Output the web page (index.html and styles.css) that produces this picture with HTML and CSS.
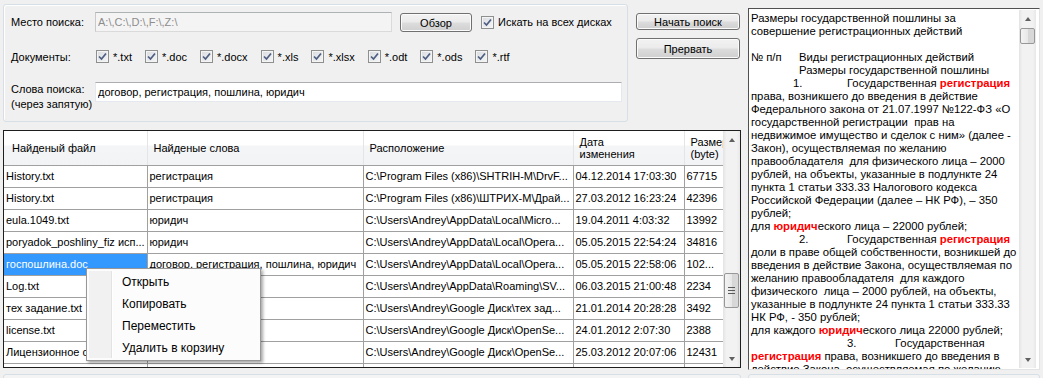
FILE: index.html
```html
<!DOCTYPE html>
<html lang="ru">
<head>
  <meta charset="UTF-8">
  <title>Поиск документов</title>
  <link rel="stylesheet" href="styles.css">
</head>
<body>
<div class="window">

  <div class="left-col">
    <div class="top-row">
      <div class="group">
        <div class="row row-place">
          <label class="lbl">Место поиска:</label>
          <input class="txt txt-place" value="A:\,C:\,D:\,F:\,Z:\" disabled>
          <button class="btn btn-browse">Обзор</button>
          <span class="check">
            <span class="cb"><svg viewBox="0 0 11 11"><path d="M2 5.5 4.5 8 9 2.5"/></svg></span>Искать на всех дисках
          </span>
        </div>

        <div class="row row-docs">
          <label class="lbl">Документы:</label>
          <div class="checks">
            <span class="check"><span class="cb"><svg viewBox="0 0 11 11"><path d="M2 5.5 4.5 8 9 2.5"/></svg></span>*.txt</span>
            <span class="check"><span class="cb"><svg viewBox="0 0 11 11"><path d="M2 5.5 4.5 8 9 2.5"/></svg></span>*.doc</span>
            <span class="check"><span class="cb"><svg viewBox="0 0 11 11"><path d="M2 5.5 4.5 8 9 2.5"/></svg></span>*.docx</span>
            <span class="check"><span class="cb"><svg viewBox="0 0 11 11"><path d="M2 5.5 4.5 8 9 2.5"/></svg></span>*.xls</span>
            <span class="check"><span class="cb"><svg viewBox="0 0 11 11"><path d="M2 5.5 4.5 8 9 2.5"/></svg></span>*.xlsx</span>
            <span class="check"><span class="cb"><svg viewBox="0 0 11 11"><path d="M2 5.5 4.5 8 9 2.5"/></svg></span>*.odt</span>
            <span class="check"><span class="cb"><svg viewBox="0 0 11 11"><path d="M2 5.5 4.5 8 9 2.5"/></svg></span>*.ods</span>
            <span class="check"><span class="cb"><svg viewBox="0 0 11 11"><path d="M2 5.5 4.5 8 9 2.5"/></svg></span>*.rtf</span>
          </div>
        </div>

        <div class="row row-words">
          <label class="lbl lbl-two">Слова поиска:<br>(через запятую)</label>
          <input class="txt txt-words" value="договор, регистрация, пошлина, юридич">
        </div>
      </div>

      <div class="actions">
        <button class="btn btn-start">Начать поиск</button>
        <button class="btn btn-stop">Прервать</button>
      </div>
    </div>

    <div class="table-box">
      <div class="grid-area">
        <table class="grid">
          <colgroup>
            <col class="c1"><col class="c2"><col class="c3"><col class="c4"><col class="c5">
          </colgroup>
          <thead>
            <tr>
              <th class="h-first">Найденый файл</th>
              <th>Найденые слова</th>
              <th>Расположение</th>
              <th class="h-two">Дата<br>изменения</th>
              <th class="h-two">Размер<br>(byte)</th>
            </tr>
          </thead>
          <tbody>
            <tr><td>History.txt</td><td>регистрация</td><td>C:\Program Files (x86)\SHTRIH-M\DrvF...</td><td>04.12.2014 17:03:30</td><td>67715</td></tr>
            <tr><td>History.txt</td><td>регистрация</td><td>C:\Program Files (x86)\ШТРИХ-М\Драй...</td><td>27.03.2012 16:23:24</td><td>42396</td></tr>
            <tr><td>eula.1049.txt</td><td>юридич</td><td>C:\Users\Andrey\AppData\Local\Micro...</td><td>19.04.2011 4:03:32</td><td>13992</td></tr>
            <tr><td>poryadok_poshliny_fiz исп...</td><td>юридич</td><td>C:\Users\Andrey\AppData\Local\Opera...</td><td>05.05.2015 22:54:24</td><td>34816</td></tr>
            <tr><td class="selected">госпошлина.doc</td><td>договор, регистрация, пошлина, юридич</td><td>C:\Users\Andrey\AppData\Local\Opera...</td><td>05.05.2015 22:58:06</td><td>102...</td></tr>
            <tr><td>Log.txt</td><td></td><td>C:\Users\Andrey\AppData\Roaming\SV...</td><td>06.03.2015 21:00:48</td><td>2234</td></tr>
            <tr><td>тех задание.txt</td><td></td><td>C:\Users\Andrey\Google Диск\тех зад...</td><td>21.01.2014 20:28:28</td><td>3492</td></tr>
            <tr><td>license.txt</td><td></td><td>C:\Users\Andrey\Google Диск\OpenSe...</td><td>24.01.2012 2:07:30</td><td>2388</td></tr>
            <tr><td>Лицензионное с...</td><td></td><td>C:\Users\Andrey\Google Диск\OpenSe...</td><td>25.03.2012 20:07:06</td><td>12431</td></tr>
            <tr><td></td><td></td><td></td><td></td><td></td></tr>
          </tbody>
        </table>
      </div>

      <div class="vscroll">
        <div class="arrow arrow-up"></div>
        <div class="track"><div class="thumb thumb-grid"><span class="grip"></span></div></div>
        <div class="arrow arrow-down"></div>
      </div>

      <ul class="menu">
        <li>Открыть</li>
        <li>Копировать</li>
        <li>Переместить</li>
        <li>Удалить в корзину</li>
      </ul>
    </div>

    <div class="strip"></div>
  </div>

  <div class="right-col">
    <div class="rtf">
      <div class="rtf-text">
        <div class="ln">Размеры государственной пошлины за</div>
        <div class="ln">совершение регистрационных действий</div>
        <div class="ln">&nbsp;</div>
        <div class="ln"><span class="tab tab-num">№ п/п</span>Виды регистрационных действий</div>
        <div class="ln ind-48">Размеры государственной пошлины</div>
        <div class="ln ind-42"><span class="tab tab-54">1.</span>Государственная <b class="hl">регистрация</b></div>
        <div class="ln">права, возникшего до введения в действие</div>
        <div class="ln">Федерального закона от 21.07.1997 №122-ФЗ «О</div>
        <div class="ln">государственной регистрации  прав на</div>
        <div class="ln">недвижимое имущество и сделок с ним» (далее -</div>
        <div class="ln">Закон), осуществляемая по желанию</div>
        <div class="ln">правообладателя  для физического лица – 2000</div>
        <div class="ln">рублей, на объекты, указанные в подлункте 24</div>
        <div class="ln">пункта 1 статьи 333.33 Налогового кодекса</div>
        <div class="ln">Российской Федерации (далее – НК РФ), – 350</div>
        <div class="ln">рублей;</div>
        <div class="ln">для <b class="hl">юридич</b>еского лица – 22000 рублей;</div>
        <div class="ln ind-48"><span class="tab tab-48">2.</span>Государственная <b class="hl">регистрация</b></div>
        <div class="ln">доли в праве общей собственности, возникшей до</div>
        <div class="ln">введения в действие Закона, осуществляемая по</div>
        <div class="ln">желанию правообладателя  для каждого</div>
        <div class="ln">физического  лица – 2000 рублей, на объекты,</div>
        <div class="ln">указанные в подлункте 24 пункта 1 статьи 333.33</div>
        <div class="ln">НК РФ, - 350 рублей;</div>
        <div class="ln">для каждого <b class="hl">юридич</b>еского лица 22000 рублей;</div>
        <div class="ln ind-96"><span class="tab tab-48">3.</span>Государственная</div>
        <div class="ln"><b class="hl">регистрация</b> права, возникшего до введения в</div>
        <div class="ln">действие Закона, осуществляемая по желанию</div>
      </div>
      <div class="vscroll">
        <div class="arrow arrow-up"></div>
        <div class="track"><div class="thumb thumb-rtf"></div></div>
        <div class="arrow arrow-down"></div>
      </div>
    </div>
    <div class="strip"></div>
  </div>

</div>
</body>
</html>
```

FILE: styles.css
```css
* { box-sizing: border-box; }
html, body {
  margin: 0;
  height: 378px;
  overflow: hidden;
}
body {
  background: #f0f0f0;
  color: #000;
  font-family: "Liberation Sans", Arial, sans-serif;
  font-size: 11px;
}
.window {
  display: flex;
  gap: 7px;
  padding-left: 3px;
}

/* left column */
.left-col {
  width: 738px;
  padding-top: 4px;
}
.top-row {
  display: flex;
  gap: 8px;
}
.group {
  width: 625px;
  height: 118px;
  border: 1px solid #d5dfe5;
  border-radius: 3px;
  box-shadow: inset 1px 1px 0 #fff;
  padding: 7px 0 0 7px;
}
.row {
  display: flex;
  align-items: center;
}
.row-docs { margin-top: 18px; height: 13px; }
.row-words { margin-top: 19px; align-items: flex-start; }
.lbl {
  width: 84px;
  flex: none;
}
.lbl-two { line-height: 15px; }
.txt {
  height: 20px;
  border: 1px solid #e3e9ef;
  border-top-color: #abadb3;
  background: #fff;
  font: 11px "Liberation Sans", Arial, sans-serif;
  padding: 0 2px;
  color: #000;
}
.txt-place {
  width: 297px;
  background: #f4f4f4;
  border-color: #adb2b5 #dadada #dadada #c9c9c9;
  color: #8d8d8d;
}
.txt-words { width: 527px; }
.btn {
  font: 11px "Liberation Sans", Arial, sans-serif;
  color: #000;
  border: 1px solid #707070;
  border-radius: 3px;
  background: linear-gradient(#f2f2f2 0%, #ebebeb 48%, #dddddd 52%, #cfcfcf 100%);
  box-shadow: inset 0 0 0 1px #fbfbfb;
  padding: 0;
}
.btn-browse {
  width: 72px;
  height: 19px;
  margin-left: 8px;
  margin-top: 1px;
}
.row-place .check { margin-left: 9px; }
.check {
  display: inline-flex;
  align-items: center;
  gap: 4px;
  white-space: nowrap;
}
.cb {
  width: 13px;
  height: 13px;
  border: 1px solid #8e8f8f;
  background: linear-gradient(135deg, #d8dbe0, #f6f6f6);
  box-shadow: inset 0 0 0 1px #f4f4f4;
  display: inline-flex;
}
.cb svg {
  width: 11px;
  height: 11px;
  fill: none;
  stroke: #4d5e82;
  stroke-width: 1.7;
}
.checks {
  display: flex;
  gap: 13px;
  margin-left: 1px;
}
.actions {
  width: 104px;
  display: flex;
  flex-direction: column;
}
.btn-start { height: 17px; margin-top: 9px; }
.btn-stop { height: 21px; margin-top: 8px; }

/* grid */
.table-box {
  position: relative;
  margin-top: 8px;
  height: 238px;
  border: 1px solid #1e1e1e;
  background: #fff;
  display: flex;
}
.grid-area {
  flex: 1;
  overflow: hidden;
}
.grid {
  table-layout: fixed;
  border-collapse: collapse;
  width: 740px;
}
.c1 { width: 143px; }
.c2 { width: 216px; }
.c3 { width: 210px; }
.c4 { width: 111px; }
.c5 { width: 60px; }
.grid th {
  height: 34px;
  font-weight: normal;
  text-align: left;
  padding: 0 6px;
  line-height: 12px;
  background: linear-gradient(#fff 0%, #fff 40%, #f4f5f7 45%, #f2f3f5 100%);
  border-right: 1px solid #e5e5e5;
  border-bottom: 1px solid #a0a0a0;
  white-space: nowrap;
  overflow: hidden;
}
.grid th.h-first { padding-left: 8px; }
.grid th.h-two { padding-top: 1px; }
.grid td {
  height: 22px;
  padding: 0 2px;
  border-right: 1px solid #a0a0a0;
  border-bottom: 1px solid #a0a0a0;
  white-space: nowrap;
  overflow: hidden;
}
.grid td.selected {
  background: #3399ff;
  color: #fff;
}

/* scrollbars */
.vscroll {
  width: 17px;
  flex: none;
  display: flex;
  flex-direction: column;
  background: linear-gradient(90deg, #e3e3e3, #f2f2f2 20%, #f2f2f2 80%, #e8e8e8);
}
.arrow {
  height: 17px;
  flex: none;
  display: flex;
  align-items: center;
  justify-content: center;
}
.arrow::before {
  content: "";
  border-left: 3.5px solid transparent;
  border-right: 3.5px solid transparent;
}
.arrow-up::before { border-bottom: 4px solid #606060; }
.arrow-down::before { border-top: 4px solid #606060; }
.track { flex: 1; }
.thumb {
  margin: 0 1px;
  border: 1px solid #979797;
  border-radius: 2px;
  background: linear-gradient(90deg, #f3f3f3, #e8e8e8 50%, #d6d6d6 51%, #d9d9d9);
  display: flex;
  align-items: center;
  justify-content: center;
}
.thumb-grid { margin-top: 125px; height: 35px; }
.thumb-rtf { margin-top: 1px; height: 16px; }
.grip {
  width: 7px;
  height: 7px;
  border-top: 1px solid #595959;
  border-bottom: 1px solid #595959;
  position: relative;
}
.grip::after {
  content: "";
  position: absolute;
  left: 0;
  right: 0;
  top: 2px;
  border-top: 1px solid #595959;
}

/* context menu */
.menu {
  position: absolute;
  left: 82px;
  top: 137px;
  width: 175px;
  height: 93px;
  margin: 0;
  padding: 3px 2px;
  list-style: none;
  background: #fcfcfc;
  border: 1px solid #979797;
  box-shadow: 2px 2px 3px rgba(0, 0, 0, 0.35);
  font-size: 12px;
}
.menu::before {
  content: "";
  position: absolute;
  left: 2px;
  top: 2px;
  bottom: 2px;
  width: 22px;
  background: #f1f1f1;
  border-right: 1px solid #e2e3e3;
  box-shadow: 1px 0 0 #fff;
}
.menu li {
  position: relative;
  height: 22px;
  line-height: 20px;
  padding-left: 33px;
}

/* bottom strip */
.strip {
  margin-top: 6px;
  height: 14px;
  border: 1px solid #d5dfe5;
  border-radius: 3px;
  background: #f4f4f4;
}

/* right column */
.right-col {
  width: 292px;
  padding-top: 8px;
}
.rtf {
  height: 362px;
  display: flex;
  background: #fff;
  border: 1px solid;
  border-color: #505050 #e3e3e3 #e3e3e3 #505050;
  padding-right: 3px;
}
.rtf-text {
  flex: 1;
  overflow: hidden;
  padding: 3px 0 0 2px;
  font-size: 11.3px;
  line-height: 13px;
}
.rtf .vscroll { margin: 1px 0; }
.ln { white-space: pre; }
.tab { display: inline-block; }
.tab-num { width: 48px; }
.tab-54 { width: 54px; }
.tab-48 { width: 48px; }
.ind-42 { padding-left: 42px; }
.ind-48 { padding-left: 48px; }
.ind-96 { padding-left: 96px; }
.hl {
  color: #ff0000;
  font-weight: bold;
}
.right-col .strip { margin-top: 4px; }
```
